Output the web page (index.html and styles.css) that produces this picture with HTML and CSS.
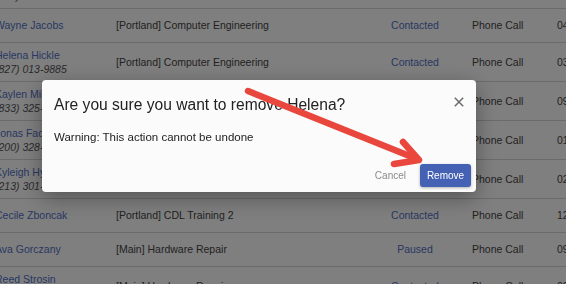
FILE: index.html
```html
<!DOCTYPE html>
<html lang="en">
<head>
<meta charset="utf-8">
<title>Remove contact</title>
<link rel="stylesheet" href="styles.css">
</head>
<body>
<main class="page">
  <div class="rows">
    <div class="row">
      <div class="cell name"><a class="person">Mary Schultz</a><span class="phone">(516) 402-7731</span></div>
      <div class="cell course">[Main] Hardware Repair</div>
      <div class="cell status">Contacted</div>
      <div class="cell method">Phone Call</div>
      <div class="cell date">05/02/2019</div>
    </div>
    <div class="row">
      <div class="cell name"><a class="person">Wayne Jacobs</a></div>
      <div class="cell course">[Portland] Computer Engineering</div>
      <div class="cell status">Contacted</div>
      <div class="cell method">Phone Call</div>
      <div class="cell date">04/18/2019</div>
    </div>
    <div class="row">
      <div class="cell name"><a class="person">Helena Hickle</a><span class="phone">(827) 013-9885</span></div>
      <div class="cell course">[Portland] Computer Engineering</div>
      <div class="cell status">Contacted</div>
      <div class="cell method">Phone Call</div>
      <div class="cell date">03/27/2019</div>
    </div>
    <div class="row">
      <div class="cell name"><a class="person">Kaylen Miller</a><span class="phone">(833) 325-4417</span></div>
      <div class="cell course">[Main] Hardware Repair</div>
      <div class="cell status">Contacted</div>
      <div class="cell method">Phone Call</div>
      <div class="cell date">09/14/2019</div>
    </div>
    <div class="row">
      <div class="cell name"><a class="person">Jonas Fadel</a><span class="phone">(200) 328-1190</span></div>
      <div class="cell course">[Portland] CDL Training 2</div>
      <div class="cell status">Contacted</div>
      <div class="cell method">Phone Call</div>
      <div class="cell date">01/22/2019</div>
    </div>
    <div class="row">
      <div class="cell name"><a class="person">Kyleigh Hyatt</a><span class="phone">(213) 301-5562</span></div>
      <div class="cell course">[Main] Hardware Repair</div>
      <div class="cell status">Contacted</div>
      <div class="cell method">Phone Call</div>
      <div class="cell date">02/08/2019</div>
    </div>
    <div class="row">
      <div class="cell name"><a class="person">Cecile Zboncak</a></div>
      <div class="cell course">[Portland] CDL Training 2</div>
      <div class="cell status">Contacted</div>
      <div class="cell method">Phone Call</div>
      <div class="cell date">12/03/2019</div>
    </div>
    <div class="row">
      <div class="cell name"><a class="person">Ava Gorczany</a></div>
      <div class="cell course">[Main] Hardware Repair</div>
      <div class="cell status">Paused</div>
      <div class="cell method">Phone Call</div>
      <div class="cell date">09/30/2019</div>
    </div>
    <div class="row">
      <div class="cell name"><a class="person">Reed Strosin</a><span class="phone">(644) 518-2210</span></div>
      <div class="cell course">[Main] Hardware Repair</div>
      <div class="cell status">Contacted</div>
      <div class="cell method">Phone Call</div>
      <div class="cell date">02/11/2019</div>
    </div>
  </div>
</main>

<div class="backdrop"></div>

<div class="dialog-layer">
  <section class="dialog" role="dialog" aria-labelledby="dlg-title">
    <header class="dialog-header">
      <h2 id="dlg-title" class="dialog-title">Are you sure you want to remove Helena?</h2>
      <button class="dialog-close" aria-label="Close">
        <svg width="10" height="10" viewBox="0 0 10 10"><path d="M0.8 0.8 L9.2 9.2 M9.2 0.8 L0.8 9.2" stroke="#6b6b6b" stroke-width="1.5" fill="none"/></svg>
      </button>
    </header>
    <div class="dialog-body">Warning: This action cannot be undone</div>
    <footer class="dialog-footer">
      <button class="btn-text">Cancel</button>
      <button class="btn-primary">Remove</button>
    </footer>
  </section>
</div>

<svg class="annotation" width="566" height="284" viewBox="0 0 566 284">
  <g stroke="#e9473d" stroke-width="6.5" stroke-linecap="round" stroke-linejoin="round" fill="none">
    <line x1="248" y1="91" x2="417" y2="159"/>
    <polyline points="403,142 419,160 394,164"/>
  </g>
</svg>
</body>
</html>
```

FILE: styles.css
```css
html, body {
  margin: 0;
  padding: 0;
  width: 566px;
  height: 284px;
  overflow: hidden;
  background: #ffffff;
  font-family: "Liberation Sans", Arial, sans-serif;
}

.page {
  margin: -30px 0 0 -5px;
}

.rows {
  display: flex;
  flex-direction: column;
}

.row {
  display: grid;
  grid-template-columns: 121px 245px 108px 88px 1fr;
  align-items: center;
  min-height: 33px;
  border-bottom: 1px solid #d6d6d6;
  font-size: 10.5px;
  line-height: 14.5px;
  color: #444444;
  white-space: nowrap;
}

.cell {
  overflow: hidden;
}

.name {
  display: flex;
  flex-direction: column;
  padding: 4.5px 0;
}

.person {
  color: #5270c4;
}

.phone {
  font-style: italic;
  color: #555555;
}

.status {
  text-align: center;
  color: #5270c4;
}

.method {
  padding-left: 3px;
}

.backdrop {
  position: fixed;
  inset: 0;
  background: rgba(0, 0, 0, 0.5);
}

.dialog-layer {
  position: fixed;
  inset: 0;
  padding: 80px 0 0 42px;
}

.dialog {
  width: 434px;
  background: #fbfbfb;
  border-radius: 4px;
  box-shadow: 0 6px 22px rgba(0, 0, 0, 0.35);
  display: flex;
  flex-direction: column;
}

.dialog-header {
  display: flex;
  justify-content: space-between;
  align-items: flex-start;
  padding: 16px 12px 0 12px;
}

.dialog-title {
  margin: 0;
  font-size: 15.6px;
  line-height: 18px;
  font-weight: normal;
  color: #222222;
}

.dialog-close {
  margin: 1px 0 0 0;
  padding: 0;
  border: 0;
  background: none;
  width: 10px;
  height: 10px;
  display: block;
}

.dialog-close svg {
  display: block;
}

.dialog-body {
  padding: 16px 12px 15px 12px;
  font-size: 11.5px;
  line-height: 14px;
  color: #222222;
}

.dialog-footer {
  display: flex;
  justify-content: flex-end;
  align-items: center;
  gap: 7px;
  padding: 5px;
}

.btn-text {
  border: 0;
  background: none;
  font-family: inherit;
  font-size: 10px;
  color: #8a8a8a;
  padding: 0 7px;
  height: 23px;
}

.btn-primary {
  border: 0;
  border-radius: 3px;
  background: #4461b3;
  color: #ffffff;
  font-family: inherit;
  font-size: 10px;
  width: 51px;
  height: 23px;
  padding: 0;
  box-shadow: 0 1px 3px rgba(0, 0, 0, 0.3);
}

.annotation {
  position: fixed;
  left: 0;
  top: 0;
  pointer-events: none;
}
```
